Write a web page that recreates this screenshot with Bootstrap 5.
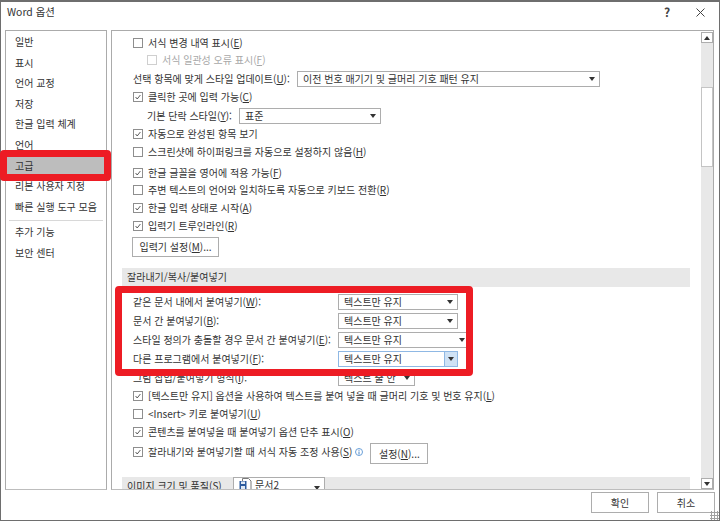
<!DOCTYPE html>
<html lang="ko">
<head>
<meta charset="utf-8">
<title>Word 옵션</title>
<link href="https://cdn.jsdelivr.net/npm/bootstrap@5.3.0/dist/css/bootstrap.min.css" rel="stylesheet">
<style>
html,body{margin:0;height:521px;overflow:hidden;background:#fff}
body{font-family:"Noto Sans CJK KR","Noto Sans",sans-serif;font-size:10px;color:#333;line-height:18px}
.win{width:720px;height:521px;border:1px solid #6e6e6e;border-top-width:2px;position:relative;background:#fff}
.ttl{height:28px;padding:0 0 8px 6px;font-size:10.4px;color:#333}
.ttl .help{margin-left:auto;width:12px;font-weight:700;font-size:12px;color:#444;margin-right:23px;text-align:center}
.ttl svg{margin-right:14px}
.wbody{height:460px;padding:0 5px 0 4px;gap:4px}
.side{width:102px;border:1px solid #ababab;border-bottom-color:#bdbdbd;background:#fff;padding-top:1px}
.sitem{background:transparent;border:0;padding:0 0 0 9px;height:20.6px;line-height:20px;color:#333;font-size:10px;border-radius:0;white-space:nowrap}
.sitem.sel{background:#bdbdbd;color:#333}
.sep{height:1px;background:#d8d8d8;margin:3px 3px 0 3px}
.sep + .sitem{margin-top:1px}
.pane{border:1px solid #ababab;border-bottom-color:#bdbdbd;min-width:0;overflow:hidden}
.scroller{overflow:hidden;min-width:0;padding:3px 11px 0 10px}
.sb{width:12px;background:#e8e8e8;margin-top:1px}
.sbtn{height:11px;background:#fff;border:1px solid #adadad}
.thumb{height:80px;margin-top:44px;background:#fff;border:1px solid #c4c4c4}
.tri{width:0;height:0;border-left:3.5px solid transparent;border-right:3.5px solid transparent;border-top:4px solid #333}
.tri.up{border-top:0;border-bottom:4px solid #333}
.opt{padding-left:11px;white-space:nowrap;align-items:flex-start}
.opt.lv1{padding-left:25px}
.h17{height:17px}.h18{height:18px}.h19{height:19px}.h20{height:20px}.h21{height:21px}
.cb{width:10px;height:10px;border:1px solid #8e8e8e;margin:4px 5px 0 0;flex:none;background:#fff;display:block}
.cb.off{border-color:#cfcfcf}
.txt-off{color:#a8a8a8}
.opt u{text-decoration-thickness:1px;text-underline-offset:1px}
.lbl{flex:none}
.cmb{height:16px;border:1px solid #adadad;background:#fff;padding:0 0 0 5px;line-height:14px;flex:none;color:#333;margin-top:1px}
.cmb .tri{margin:0 4px 0 auto}
.c303{width:303px}.c142{width:142px}.c120{width:120px}.c132{width:132px}.c77{width:77px}
.l164{width:164px}.l92{width:92px}.l205{width:205px}
.cmb.foc{border-color:#8fb8e4;padding-right:0}
.cmb.foc .arrow{margin-left:auto;width:13px;height:14px;background:#cfe2f5;border-left:1px solid #8fb8e4}
.cmb.foc .tri{margin:0}
.wbtn{--bs-btn-padding-x:0;--bs-btn-padding-y:0;--bs-btn-font-size:10px;--bs-btn-color:#333;--bs-btn-bg:#fff;--bs-btn-border-color:#adadad;--bs-btn-border-radius:0;--bs-btn-line-height:18px;--bs-btn-hover-bg:#fff;--bs-btn-hover-color:#333;--bs-btn-hover-border-color:#adadad}
.b87{width:87px;height:20px;margin-left:10px;display:block}
.set-btn{width:58px;height:21px;margin-left:7px;flex:none}
.info{margin:5px 0 0 3px;flex:none}
.sec{height:19px;background:#e8e8e8;margin-top:11px;padding-left:5px;line-height:18px;color:#333;margin-bottom:6px}
.sec2{margin-top:14px;margin-bottom:0;height:30px;align-items:flex-start}
.sec2 .seclbl{width:106px;flex:none}
.sec2 .cmb{width:92px;height:20px;margin-top:0}
.docic{margin-right:2px;flex:none}
.foot{height:29px;padding:2px 4px 0 0;gap:8px}
.foot .btn{width:58px;height:21px}
.grip{position:absolute;right:0;bottom:0;width:9px;height:9px;background-image:radial-gradient(#a0a0a0 1px,transparent 1.2px);background-size:3px 3px}
.redbox{position:absolute;border:7px solid #ed1c24;border-radius:4px;pointer-events:none}
.rb1{left:-1px;top:148px;width:111px;height:31px}
.rb2{left:114px;top:284px;width:358px;height:90px}
</style>
</head>
<body>
<div class="win">
  <div class="ttl d-flex align-items-center">
    <span>Word 옵션</span>
    <span class="help">?</span>
    <svg width="9" height="9" viewBox="0 0 9 9" aria-hidden="true"><path d="M0.5 0.5l8 8M8.5 0.5l-8 8" stroke="#444" stroke-width="1" fill="none"/></svg>
  </div>
  <div class="wbody d-flex">
    <div class="side flex-shrink-0">
      <div class="list-group list-group-flush">
        <div class="list-group-item sitem">일반</div>
        <div class="list-group-item sitem">표시</div>
        <div class="list-group-item sitem">언어 교정</div>
        <div class="list-group-item sitem">저장</div>
        <div class="list-group-item sitem">한글 입력 체계</div>
        <div class="list-group-item sitem">언어</div>
        <div class="list-group-item sitem sel">고급</div>
        <div class="list-group-item sitem">리본 사용자 지정</div>
        <div class="list-group-item sitem">빠른 실행 도구 모음</div>
        <div class="sep"></div>
        <div class="list-group-item sitem">추가 기능</div>
        <div class="list-group-item sitem">보안 센터</div>
      </div>
    </div>
    <div class="pane flex-grow-1 d-flex">
      <div class="scroller flex-grow-1">
        <div class="opt d-flex h17"><span class="cb"></span><span>서식 변경 내역 표시(<u>E</u>)</span></div>
        <div class="opt lv1 d-flex h19 txt-off"><span class="cb off"></span><span>서식 일관성 오류 표시(<u>F</u>)</span></div>
        <div class="opt d-flex h18"><span class="lbl l164">선택 항목에 맞게 스타일 업데이트(<u>U</u>):</span><span class="cmb c303 d-flex align-items-center">이전 번호 매기기 및 글머리 기호 패턴 유지<span class="tri"></span></span></div>
        <div class="opt d-flex h19"><svg class="cb" viewBox="0 0 10 10"><path d="M2 5l2 2.5 4-5" stroke="#333" stroke-width="1" fill="none"/></svg><span>클릭한 곳에 입력 가능(<u>C</u>)</span></div>
        <div class="opt lv1 d-flex h18"><span class="lbl l92">기본 단락 스타일(<u>Y</u>):</span><span class="cmb c142 d-flex align-items-center">표준<span class="tri"></span></span></div>
        <div class="opt d-flex h18"><svg class="cb" viewBox="0 0 10 10"><path d="M2 5l2 2.5 4-5" stroke="#333" stroke-width="1" fill="none"/></svg><span>자동으로 완성된 항목 보기</span></div>
        <div class="opt d-flex h21"><span class="cb"></span><span>스크린샷에 하이퍼링크를 자동으로 설정하지 않음(<u>H</u>)</span></div>
        <div class="opt d-flex h17"><svg class="cb" viewBox="0 0 10 10"><path d="M2 5l2 2.5 4-5" stroke="#333" stroke-width="1" fill="none"/></svg><span>한글 글꼴을 영어에 적용 가능(<u>F</u>)</span></div>
        <div class="opt d-flex h18"><span class="cb"></span><span>주변 텍스트의 언어와 일치하도록 자동으로 키보드 전환(<u>R</u>)</span></div>
        <div class="opt d-flex h18"><svg class="cb" viewBox="0 0 10 10"><path d="M2 5l2 2.5 4-5" stroke="#333" stroke-width="1" fill="none"/></svg><span>한글 입력 상태로 시작(<u>A</u>)</span></div>
        <div class="opt d-flex h20"><svg class="cb" viewBox="0 0 10 10"><path d="M2 5l2 2.5 4-5" stroke="#333" stroke-width="1" fill="none"/></svg><span>입력기 트루인라인(<u>R</u>)</span></div>
        <button type="button" class="btn wbtn b87">입력기 설정(<u>M</u>)...</button>
        <div class="sec">잘라내기/복사/붙여넣기</div>
        <div class="opt d-flex h19"><span class="lbl l205">같은 문서 내에서 붙여넣기(<u>W</u>):</span><span class="cmb c120 d-flex align-items-center">텍스트만 유지<span class="tri"></span></span></div>
        <div class="opt d-flex h19"><span class="lbl l205">문서 간 붙여넣기(<u>B</u>):</span><span class="cmb c120 d-flex align-items-center">텍스트만 유지<span class="tri"></span></span></div>
        <div class="opt d-flex h19"><span class="lbl l205">스타일 정의가 충돌할 경우 문서 간 붙여넣기(<u>E</u>):</span><span class="cmb c132 d-flex align-items-center">텍스트만 유지<span class="tri"></span></span></div>
        <div class="opt d-flex h19"><span class="lbl l205">다른 프로그램에서 붙여넣기(<u>F</u>):</span><span class="cmb c120 foc d-flex align-items-center">텍스트만 유지<span class="arrow d-flex align-items-center justify-content-center"><span class="tri"></span></span></span></div>
        <div class="opt d-flex h18"><span class="lbl l205">그림 삽입/붙여넣기 형식(<u>I</u>):</span><span class="cmb c77 d-flex align-items-center">텍스트 줄 안<span class="tri"></span></span></div>
        <div class="opt d-flex h18"><svg class="cb" viewBox="0 0 10 10"><path d="M2 5l2 2.5 4-5" stroke="#333" stroke-width="1" fill="none"/></svg><span>[텍스트만 유지] 옵션을 사용하여 텍스트를 붙여 넣을 때 글머리 기호 및 번호 유지(<u>L</u>)</span></div>
        <div class="opt d-flex h18"><span class="cb"></span><span>&lt;Insert&gt; 키로 붙여넣기(<u>U</u>)</span></div>
        <div class="opt d-flex h20"><svg class="cb" viewBox="0 0 10 10"><path d="M2 5l2 2.5 4-5" stroke="#333" stroke-width="1" fill="none"/></svg><span>콘텐츠를 붙여넣을 때 붙여넣기 옵션 단추 표시(<u>O</u>)</span></div>
        <div class="opt d-flex h20"><svg class="cb" viewBox="0 0 10 10"><path d="M2 5l2 2.5 4-5" stroke="#333" stroke-width="1" fill="none"/></svg><span>잘라내기와 붙여넣기할 때 서식 자동 조정 사용(<u>S</u>)</span>
          <svg class="info" width="8" height="8" viewBox="0 0 8 8" aria-hidden="true"><circle cx="4" cy="4" r="3.5" stroke="#6aa0d8" fill="none"/><path d="M4 1.8v1M4 3.5v3" stroke="#4a84c4"/></svg>
          <button type="button" class="btn wbtn set-btn">설정(<u>N</u>)...</button>
        </div>
        <div class="sec sec2 d-flex"><span class="seclbl">이미지 크기 및 품질(S)</span>
          <span class="cmb d-flex align-items-start"><svg class="docic" width="14" height="14" viewBox="0 0 14 14" aria-hidden="true"><path d="M3.5 0.5h6l2.5 2.5v10h-8.500z" fill="#fff" stroke="#7a7a7a"/><rect x="0.500" y="3" width="7" height="8" fill="#2b5a9e"/><rect x="2" y="3.500" width="4" height="2.500" fill="#dfe9f5"/><rect x="2" y="8" width="4" height="3" fill="#dfe9f5"/></svg>문서2<span class="tri mt-2"></span></span>
        </div>
      </div>
      <div class="sb d-flex flex-column flex-shrink-0">
        <div class="sbtn d-flex align-items-center justify-content-center"><span class="tri up"></span></div>
        <div class="thumb"></div>
        <div class="sbtn d-flex align-items-center justify-content-center mt-auto"><span class="tri"></span></div>
      </div>
    </div>
  </div>
  <div class="foot d-flex justify-content-end">
    <button type="button" class="btn wbtn">확인</button>
    <button type="button" class="btn wbtn">취소</button>
  </div>
  <span class="grip"></span>
  <div class="redbox rb1"></div>
  <div class="redbox rb2"></div>
</div>
</body>
</html>
